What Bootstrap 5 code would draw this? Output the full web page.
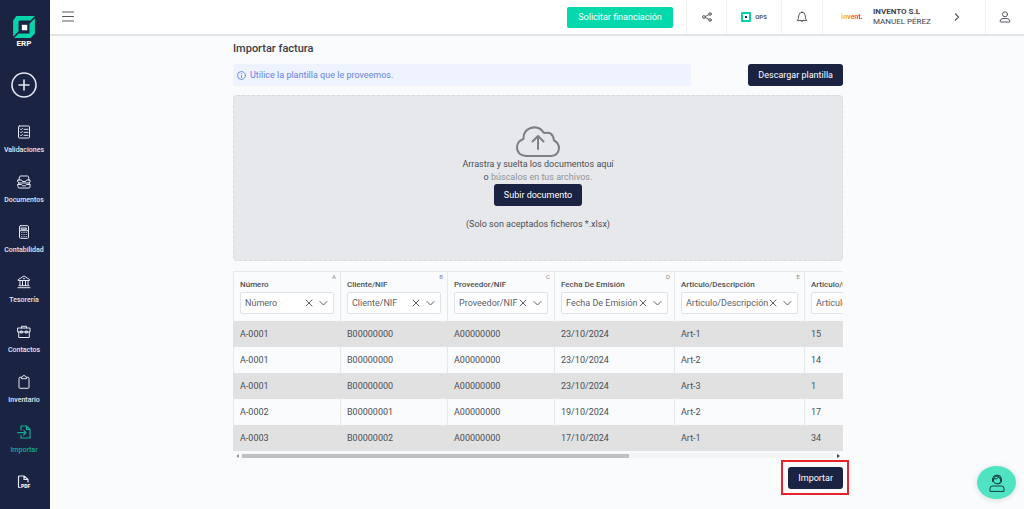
<!DOCTYPE html>
<html lang="es">
<head>
<meta charset="utf-8">
<meta name="viewport" content="width=device-width, initial-scale=1">
<title>Importar factura</title>
<link rel="stylesheet" href="https://cdn.jsdelivr.net/npm/bootstrap@5.3.0/dist/css/bootstrap.min.css">
<style>
:root{--navy:#1a2342;--mint:#04d9ab;--line:#e6e8ea}
body{font:9px/13px Roboto,sans-serif;color:#4b4f56;background:#f9fbfd}
svg{display:block;fill:none;stroke:currentColor;stroke-width:1.2;stroke-linecap:round;stroke-linejoin:round;flex:none}
button,select{font:inherit;color:inherit}
.side{width:50px;padding-right:2px;background:var(--navy);color:#e4e8f2;z-index:5}
.side > *{flex-shrink:0}
.brand-erp{padding-top:15px;height:58px;font:700 8px/10px Roboto,sans-serif;color:#fff}
.add{height:54px}
.side-list{padding-top:13px}
.side-link{height:50px;gap:6px;font:500 7px/10px Roboto,sans-serif;color:inherit;text-decoration:none;white-space:nowrap}
.side-link.active{color:#10ad94}
.page{margin-left:50px}
.top{height:36px;background:#fff;border-bottom:2px solid #e3e5e8;color:#555964}
.cell{border-left:1px solid #f0f1f3;height:34px;background:none;border-width:0 0 0 1px;padding:0}
.w40{width:40px}.w55{width:55px}.w41{width:41px}.w38{width:39px}
.fin{background:var(--mint);color:#fff;border:0;border-radius:2px;width:106px;height:21px;margin-right:13px}
.ops{font:700 6px/8px Roboto,sans-serif;gap:4px}
.account{width:163px;padding:0 24px 0 18px;text-align:left}
.account-logo{font:900 7px/10px Roboto,sans-serif;width:32px;background:linear-gradient(90deg,#ffc93c,#f7941d 30%,#ea3f3f 60%);-webkit-background-clip:text;background-clip:text;color:transparent}
.account-name{font:400 8px/10px Roboto,sans-serif;color:#3e414a}
.wrap{max-width:612px;margin:0 auto;padding:0 0 16px 2px}
h1{font:500 11px/14px Roboto,sans-serif;color:#3a3e48;margin:6px 0 8px}
.note{background:#eff3ff;color:#6384e8;height:22px;width:75%;padding:0 4px;gap:4px;border-radius:2px}
.navy{background:var(--navy);color:#fff;border:0;border-radius:3px;height:22px;padding:0 10px}
.drop{background:#e7e8eb;border:1px dashed #d9dbde;border-radius:4px;height:166px;margin-top:9px;padding-top:30px;text-align:center}
.drop a{color:#8f939a;text-decoration:none}
.drop p{margin:0}
.grid-box{margin-top:10px;overflow-x:auto;scrollbar-width:none}
.grid-box::-webkit-scrollbar{display:none}
.sheet{width:701px;table-layout:fixed;border-collapse:separate;border-spacing:0}
.sheet th,.sheet td{border-left:1px solid var(--line);padding:0 6px}
.sheet td{height:26px}
.sheet th{height:50px;border-top:1px solid var(--line);vertical-align:top;padding-top:2px;font:500 8px/10px Roboto,sans-serif;white-space:nowrap}
.sheet tbody tr:nth-child(odd) td{background:#e1e1e1;border-color:#e1e1e1}
.letter{font:400 6px/6px Roboto,sans-serif;text-align:right;color:#858990;margin-right:-2px}
.pick{height:22px;margin-top:2px;border:1px solid #dfe2e6;border-radius:2px;background:#fff;padding:0 5px 0 4px;font:400 9px/13px Roboto,sans-serif;color:#5d6168}
.pick select{appearance:none;border:0;background:none;padding:0;flex:1 1 0;min-width:0;outline-offset:2px;color:inherit}
.pick button{border:0;background:none;padding:0;margin-right:6px}
.bar{height:5px;margin-top:2px;background:#f3f4f5;color:#777}
.bar-arrow{width:9px;height:5px;background:#fafbfc}
.bar-thumb{height:4px;width:65.4%;background:#bfc0c2}
.send{margin-top:9px}
.outlined{position:relative}
.outlined::after{content:"";position:absolute;inset:-7px -6px -6px -7px;border:2px solid #e8232a;pointer-events:none}
.help{position:fixed;right:8px;bottom:10px;width:39px;height:33px;border:0;border-radius:50%;background:#4fe3c1;color:#173c42;box-shadow:0 1px 6px #0002}
</style>
</head>
<body>
<nav class="side position-fixed top-0 start-0 vh-100 overflow-hidden d-flex flex-column" aria-label="Principal">
  <div class="brand-erp d-flex flex-column align-items-center">
    <svg width="24" height="24" viewBox="0 0 22 22"><g stroke="none"><path fill="#07d3a9" d="M4 1h17l-4 4H7L6 6v9l-5 5V5zM21 3v14l-4 4H2l4-4h10V8z"/><path fill="#fff" d="M9 9h5v5H9z"/></g></svg>
    <span>ERP</span>
  </div>
  <div class="add d-flex justify-content-center align-items-center"><button class="border-0 bg-transparent p-0" aria-label="Nuevo"><svg width="26" height="26" viewBox="0 0 26 26"><g stroke-width="1.600"><circle cx="13" cy="13" r="12"/><path d="M13 8v10M8 13h10"/></g></svg></button></div>
  <div class="side-list">
    <a class="side-link d-flex flex-column align-items-center" href="#"><svg width="14" height="14" viewBox="0 0 14 14"><g stroke-width="1"><rect x="1.500" y="1" width="11" height="12" rx="1"/><path d="M3.300 4l.8.8L5.300 3.500M3.300 7l.8.8 1.200-1.300M3.300 10l.8.8 1.200-1.300M7 4.300h4M7 7.300h4M7 10.300h4"/></g></svg>Validaciones</a>
    <a class="side-link d-flex flex-column align-items-center" href="#"><svg width="14" height="14" viewBox="0 0 14 14"><g stroke-width="1"><path d="M2 5l.5-3.300Q2.700 1 3.500 1h7q.8 0 1 .7L12 5M1 5h3.500l1 1.500h3l1-1.500H13v2l-1 1H2L1 7zM1 9.500h3.500l1 1.300h3l1-1.300H13V12q0 1-1 1H2q-1 0-1-1zM2 8l-1 1.500M12 8l1 1.500"/></g></svg>Documentos</a>
    <a class="side-link d-flex flex-column align-items-center" href="#"><svg width="14" height="14" viewBox="0 0 14 14"><g stroke-width="1"><rect x="2.500" y=".7" width="9" height="12.600" rx="1"/><path d="M4.500 3h5v1.300h-5zM2.500 5.700h9M4.800 7.500h.1M7 7.500h.1M9.200 7.500h.1M4.800 9.500h.1M7 9.500h.1M9.200 9.500h.1M4.800 11.500h.1M7 11.500h.1M9.200 11.500h.1"/></g></svg>Contabilidad</a>
    <a class="side-link d-flex flex-column align-items-center" href="#"><svg width="14" height="14" viewBox="0 0 14 14"><g stroke-width="1"><path d="M1.500 4.500L7 1l5.500 3.500v1h-11zM3 5.500v5M5.500 5.500v5M8.500 5.500v5M11 5.500v5M2 10.700h10M1 12.700h12M6.500 3.700h1"/></g></svg>Tesorería</a>
    <a class="side-link d-flex flex-column align-items-center" href="#"><svg width="14" height="14" viewBox="0 0 14 14"><g stroke-width="1"><path d="M4.500 3V1.300h5V3M1 3h12v4H1zM1.700 7v5.500h10.600V7M3.700 6h1.600v2H3.700zM8.700 6h1.600v2H8.700z"/></g></svg>Contactos</a>
    <a class="side-link d-flex flex-column align-items-center" href="#"><svg width="14" height="14" viewBox="0 0 14 14"><g stroke-width="1"><path d="M4.500 2.300H3q-1 0-1 1v9q0 1 1 1h8q1 0 1-1v-9q0-1-1-1H9.500M4.500 3.300V2Q5.500 2 5.700 1q1.300-1 2.600 0 .2 1 1.200 1v1.300z"/></g></svg>Inventario</a>
    <a class="side-link active d-flex flex-column align-items-center" href="#" aria-current="page"><svg width="14" height="14" viewBox="0 0 14 14"><path d="M4 5V1h5.500L13 4.500V13H4v-2.500M9.500 1v3.500H13M.7 7.700H9M6.700 5.300L9 7.700l-2.300 2.300"/></svg>Importar</a>
    <a class="side-link d-flex flex-column align-items-center" href="#" aria-label="PDF"><svg width="14" height="14" viewBox="0 0 14 14"><path d="M3 12.500H2.500q-1 0-1-1V2q0-1 1-1H7l4 3.500V7M7 1v3.500h4"/><text x="4" y="13.300" font-family="Roboto" font-size="5" font-weight="900" fill="#fff" stroke="none">PDF</text></svg></a>
  </div>
</nav>

<div class="page">
  <header class="top d-flex align-items-center">
    <button class="border-0 bg-transparent p-0 ms-2 me-auto" aria-label="Menú"><svg width="20" height="20" viewBox="0 0 20 20"><path d="M4.500 5h11M4.500 9.500h11M4.500 14h11"/></svg></button>
    <button class="fin">Solicitar financiación</button>
    <button class="cell w40 d-flex align-items-center justify-content-center" aria-label="Compartir"><svg width="10" height="10" viewBox="0 0 10 10"><g stroke-width="1"><circle cx="2" cy="5" r="1.400"/><circle cx="8" cy="2" r="1.300"/><circle cx="8" cy="8" r="1.300"/><path d="M3.300 4.500L6.800 2.600M3.300 5.500l3.500 1.900"/></g></svg></button>
    <button class="cell w55 ops d-flex align-items-center justify-content-center"><svg width="10" height="10" viewBox="0 0 10 10"><path stroke="#09cfa4" stroke-width="2" d="M1 1h8v8H1z"/><path stroke="none" fill="#24334c" d="M4 4h2v2H4z"/></svg>OPS</button>
    <button class="cell w41 d-flex align-items-center justify-content-center" aria-label="Avisos"><svg width="12" height="12" viewBox="0 0 12 12"><g stroke-width="1"><path d="M1.500 9.300Q2.700 8 2.700 5q0-3.500 3.300-3.700Q9.300 1.500 9.300 5q0 3 1.200 4.300zM4.700 9.500q1.300 2.500 2.600 0M6 .7v.6"/></g></svg></button>
    <button class="cell account d-flex align-items-center"><span class="account-logo">invent.</span><span class="account-name me-auto"><strong>INVENTO S.L</strong><br>MANUEL PÉREZ</span><svg width="8" height="8" viewBox="0 0 8 8"><path d="M2.500 1l3 3-3 3"/></svg></button>
    <button class="cell w38 d-flex align-items-center justify-content-center" aria-label="Perfil"><svg width="12" height="12" viewBox="0 0 12 12"><g stroke-width="1"><circle cx="6" cy="3.300" r="2.500"/><path d="M1.500 11q-.6 0-.5-.8Q1.500 7.600 4 7.600h4q2.500 0 3 2.600.1.800-.5.800z"/></g></svg></button>
  </header>

  <main class="wrap">
    <h1>Importar factura</h1>
    <div class="d-flex align-items-center justify-content-between">
      <div class="note d-flex align-items-center"><svg width="9" height="9" viewBox="0 0 10 10"><g stroke-width="1"><circle cx="5" cy="5" r="4.400"/><path d="M5 4.700v2.600M5 2.800v.1"/></g></svg>Utilice la plantilla que le proveemos.</div>
      <button class="navy">Descargar plantilla</button>
    </div>
    <section class="drop">
      <svg class="mx-auto" width="44" height="32" viewBox="0 0 44 32"><g stroke="#7c7f84" stroke-width="2"><path d="M10 30Q1 29 1 21.500 1 15 7.500 13 7 5 14 2.200 23-.8 28 7q9-2 10 7.500 5 2.500 5 8-.7 7-8 7.500z"/><path d="M22 23V10M16.500 15.500L22 10l5.500 5.500"/></g></svg>
      <p>Arrastra y suelta los documentos aquí</p>
      <p>o <a href="#">búscalos en tus archivos.</a></p>
      <button class="navy">Subir documento</button>
      <p class="pt-2 mt-1">(Solo son aceptados ficheros *.xlsx)</p>
    </section>

    <div class="grid-box">
      <table class="sheet">
        <colgroup><col width="107"><col width="107"><col width="107"><col width="120"><col width="130"><col width="130"></colgroup>
        <thead><tr id="heads"></tr></thead>
        <tbody>
          <tr><td>A-0001</td><td>B00000000</td><td>A00000000</td><td>23/10/2024</td><td>Art-1</td><td>15</td></tr>
          <tr><td>A-0001</td><td>B00000000</td><td>A00000000</td><td>23/10/2024</td><td>Art-2</td><td>14</td></tr>
          <tr><td>A-0001</td><td>B00000000</td><td>A00000000</td><td>23/10/2024</td><td>Art-3</td><td>1</td></tr>
          <tr><td>A-0002</td><td>B00000001</td><td>A00000000</td><td>19/10/2024</td><td>Art-2</td><td>17</td></tr>
          <tr><td>A-0003</td><td>B00000002</td><td>A00000000</td><td>17/10/2024</td><td>Art-1</td><td>34</td></tr>
        </tbody>
      </table>
    </div>
    <div class="bar d-flex align-items-center" aria-hidden="true">
      <div class="bar-arrow d-flex align-items-center justify-content-center"><svg width="3" height="4" viewBox="0 0 3 4"><path stroke="none" fill="#999" d="M3 0v4L0 2z"/></svg></div>
      <div class="flex-grow-1"><div class="bar-thumb"></div></div>
      <div class="bar-arrow d-flex align-items-center justify-content-center"><svg width="3" height="4" viewBox="0 0 3 4"><path stroke="none" fill="#444" d="M0 0v4l3-2z"/></svg></div>
    </div>
    <div class="send d-flex justify-content-end"><div class="outlined"><button class="navy d-block">Importar</button></div></div>
  </main>
</div>

<button class="help d-flex align-items-center justify-content-center" aria-label="Ayuda"><svg width="16" height="18" viewBox="0 0 16 18"><g stroke-width="1"><circle cx="8" cy="6" r="3.800"/><path d="M3.500 7.500V5Q4 1 8 1t4.500 4v2.500M4.200 5q4 .5 5.300-1.700Q10 5 11.800 5M12.500 7.500Q12 10 9 10M1 17v-2.500Q1 12 3.500 12h9q2.500 0 2.500 2.500V17z"/></g></svg></button>

<script>
const columns = ["Número","Cliente/NIF","Proveedor/NIF","Fecha De Emisión","Articulo/Descripción","Articulo/Cantidad"];
document.getElementById("heads").innerHTML = columns.map((name, i) => `
  <th scope="col"><div class="letter">${"ABCDEF"[i]}</div><label for="col${i}">${name}</label>
  <div class="pick d-flex align-items-center"><select id="col${i}"><option>${name}</option></select>
  <button aria-label="Quitar ${name}"><svg width="8" height="8" viewBox="0 0 8 8"><g stroke-width="1"><path d="M1 1l6 6M7 1L1 7"/></g></svg></button>
  <svg width="9" height="8" viewBox="0 0 9 8"><g stroke-width="1"><path d="M1 2.500l3.500 3.500L8 2.500"/></g></svg></div></th>`).join("");
</script>
<script src="https://cdn.jsdelivr.net/npm/bootstrap@5.3.0/dist/js/bootstrap.bundle.min.js"></script>
</body>
</html>
